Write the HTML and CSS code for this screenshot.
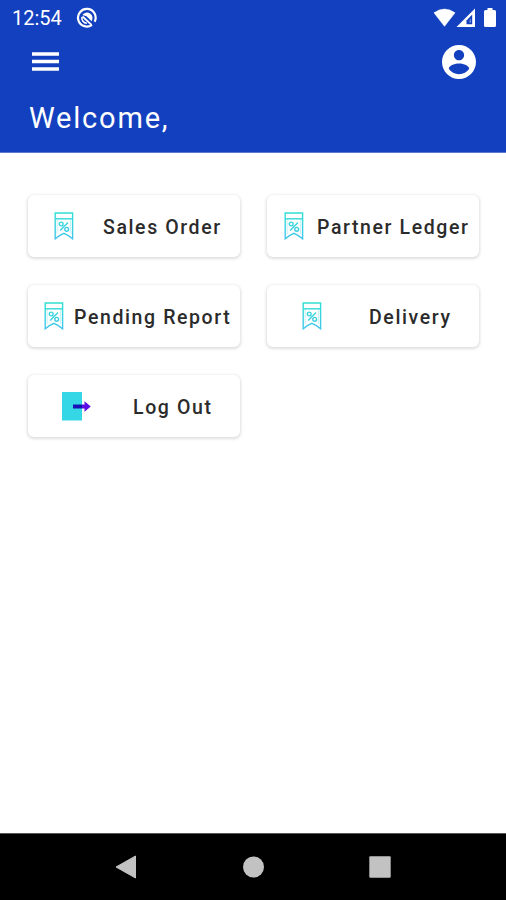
FILE: index.html
```html
<!DOCTYPE html>
<html lang="en">
<head>
<meta charset="utf-8">
<meta name="viewport" content="width=device-width, initial-scale=1">
<title>Welcome</title>
<link rel="stylesheet" href="styles.css">
</head>
<body>
<svg class="defs" width="0" height="0" aria-hidden="true">
  <defs>
    <linearGradient id="aqua" gradientUnits="userSpaceOnUse" x1="0" y1="0" x2="0" y2="28">
      <stop offset="0" stop-color="#2fe0d0"/>
      <stop offset="1" stop-color="#43c4ee"/>
    </linearGradient>
    <symbol id="receipt" viewBox="0 0 20 28">
      <g fill="none" stroke="url(#aqua)" stroke-width="1.4">
        <path d="M1.2 1h17.4v25.8l-4.2-3.2-4.5-2.2-4.5 2.2-4.2 3.2z"/>
        <path d="M1.2 6.8h17.4"/>
        <path d="M3.2 7v15M16.6 7v15" stroke-width=".3"/>
        <circle cx="7.2" cy="12" r="1.9"/>
        <circle cx="12.7" cy="17.3" r="1.9"/>
        <path d="M14 10.6l-7.8 7.8"/>
      </g>
    </symbol>
  </defs>
</svg>
<div class="screen">
  <header class="header">
    <div class="status">
      <span class="clock">12:54</span>
      <svg class="app-mark" viewBox="0 0 22 22">
        <path d="M16 17.8A8.800 8.800 0 1 1 18.600 14.800" fill="none" stroke="#fff" stroke-width="2.200"/>
        <path d="M6.400 8A5.500 5.500 0 1 1 15.600 14.200L10.500 9.300z" fill="#fff"/>
        <path d="M6.500 9.500L15.500 17.800" stroke="#fff" stroke-width="1.800"/>
        <path d="M5.900 10a5.300 5.300 0 0 0 5 6.300" fill="none" stroke="#fff" stroke-width="1.600"/>
      </svg>
      <svg class="signals" viewBox="0 0 64 20">
        <path d="M1 4.800Q11.500 -2.600 22 4.800L11.500 18.300z" fill="#fff" stroke="#fff" stroke-width=".6" stroke-linejoin="round"/>
        <path d="M42 .500v18.500H23.500z" fill="#fff"/>
        <path d="M39.200 6.500v9.700h-5.700v-3.700z" fill="#1340bf"/>
        <path d="M38 10.500v4.300h-1.500v-2.800z" fill="#6f8ad9"/>
        <path d="M54.500 0h5v2h2A1.500 1.500 0 0 1 63 3.500v14a1.500 1.500 0 0 1-1.500 1.500h-9a1.500 1.500 0 0 1-1.500-1.500v-14A1.500 1.500 0 0 1 52.500 2h2z" fill="#fff"/>
      </svg>
    </div>
    <div class="toolbar">
      <svg class="menu" viewBox="0 0 27 19"><path d="M0 2h27M0 9.5h27M0 17h27" stroke="#fff" stroke-width="3.3"/></svg>
      <svg class="avatar" viewBox="2 2 20 20"><path fill="#fff" d="M12 2C6.480 2 2 6.480 2 12s4.480 10 10 10 10-4.480 10-10S17.520 2 12 2zm0 3c1.660 0 3 1.340 3 3s-1.340 3-3 3-3-1.340-3-3 1.340-3 3-3zm0 14.200c-2.500 0-4.710-1.280-6-3.220.03-1.990 4-3.080 6-3.080 1.990 0 5.970 1.090 6 3.080-1.290 1.940-3.500 3.220-6 3.220z"/></svg>
    </div>
    <h1 class="welcome">Welcome,</h1>
  </header>
  <main class="grid">
    <button class="card sales"><svg class="receipt"><use href="#receipt"/></svg><span>Sales Order</span></button>
    <button class="card partner"><svg class="receipt"><use href="#receipt"/></svg><span>Partner Ledger</span></button>
    <button class="card pending"><svg class="receipt"><use href="#receipt"/></svg><span>Pending Report</span></button>
    <button class="card delivery"><svg class="receipt"><use href="#receipt"/></svg><span>Delivery</span></button>
    <button class="card logout">
      <svg class="exit" viewBox="0 0 29 29">
        <path d="M0 0h20v28.500H0z" fill="#35d7e6"/>
        <path d="M11 12.500h9v4h-9z" fill="#1713b4"/>
        <path d="M20 12.500h2.500V9.200l6.300 5.300-6.300 5.300v-3.300H20z" fill="#5c0ee6"/>
      </svg><span>Log Out</span></button>
  </main>
  <nav class="navbar">
    <svg viewBox="0 0 22 24"><path d="M1 12L20.500 1v22z" fill="#c2c2c2" stroke="#c2c2c2" stroke-linejoin="round"/></svg>
    <svg viewBox="0 0 22 24"><circle cx="11.500" cy="12" r="10.500" fill="#c2c2c2"/></svg>
    <svg viewBox="0 0 22 24"><rect x=".3" y="1.200" width="21.400" height="21.600" rx="1" fill="#c2c2c2"/></svg>
  </nav>
</div>
</body>
</html>
```
FILE: styles.css
```css
* { box-sizing: border-box; }
body { margin: 0; font-family: Roboto, sans-serif; background: #fff; }
.defs { display: block; }
.screen { height: 900px; display: flex; flex-direction: column; overflow: hidden; }
.header { height: 153px; flex: none; background: #1340bf; color: #fff; border-bottom: 1px solid #5a78ce; }
.status { display: flex; align-items: center; height: 36px; padding: 0 9px 0 12px; }
.clock { width: 64px; font-size: 20px; line-height: 36px; }
.app-mark { width: 22px; height: 22px; margin-top: -1px; }
.signals { width: 64px; height: 20px; margin: -1px 0 0 auto; }
.toolbar { display: flex; justify-content: space-between; align-items: center; height: 51px; padding: 0 30px 0 32px; }
.menu { width: 27px; height: 19px; }
.avatar { width: 34px; height: 34px; }
.welcome { margin: 14px 0 0 29px; font-size: 29px; line-height: 34px; font-weight: 400; letter-spacing: 1.8px; }
.grid { flex: 1; display: grid; grid-template-columns: 212px 212px; grid-auto-rows: 62px; gap: 28px 27px; align-content: start; padding: 42px 0 0 28px; }
.card { display: flex; align-items: center; border: 0; border-radius: 6px; background: #fff; box-shadow: 0 1px 3px 1px rgba(0, 0, 0, .13); padding: 0; color: #2b2b2b; font: 500 19.5px/24px Roboto, sans-serif; letter-spacing: 1.6px; white-space: nowrap; }
.card span { margin-top: 3px; }
.receipt { width: 20px; height: 28px; flex: none; }
.exit { width: 29px; height: 29px; flex: none; }
.sales { padding-left: 26px; gap: 29px; }
.partner { padding-left: 17px; gap: 13px; }
.pending { padding-left: 16px; gap: 10px; }
.delivery { padding-left: 35px; gap: 47px; }
.logout { padding-left: 34px; gap: 42px; }
.navbar { flex: none; height: 67px; display: flex; justify-content: space-between; align-items: center; padding: 0 115px; background: #000; border-top: 1px solid #555; }
.navbar svg { width: 22px; height: 24px; }
```
